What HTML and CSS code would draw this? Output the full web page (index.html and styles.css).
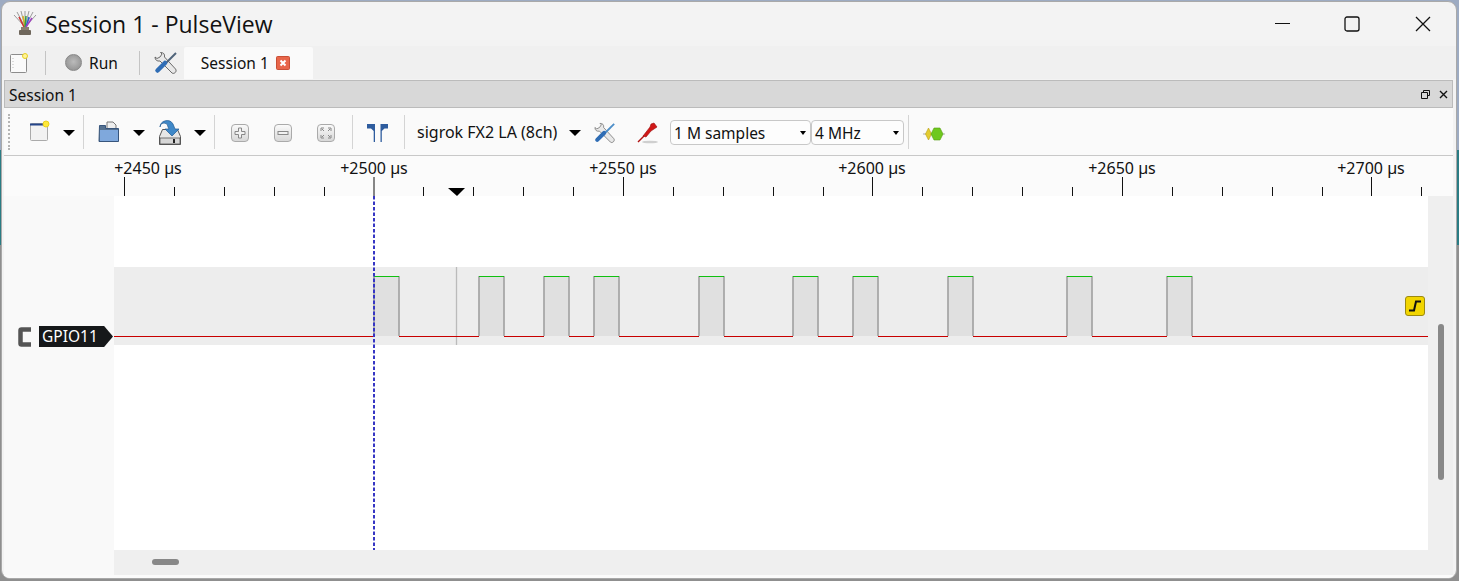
FILE: index.html
```html
<!DOCTYPE html>
<html lang="en">
<head>
    <meta charset="UTF-8">
    <title>Session 1 - PulseView</title>
    <link rel="stylesheet" href="styles.css">
</head>
<body>
<div class="window">

    <!-- Title bar -->
    <div class="titlebar">
        <svg class="app-icon" width="24" height="26" viewBox="0 0 24 26">
            <path d="M12 16L1 4M12 16L4 1M12 16L8 0M12 16L12 0M12 16L16 0M12 16L20 1M12 16L23 4" stroke="#9a9a9a" stroke-width="1" fill="none"/>
            <path d="M11 16L6 6" stroke="#d03030" stroke-width="1.5"/>
            <path d="M12 16L10 5" stroke="#e0b020" stroke-width="1.5"/>
            <path d="M12 16L13 5" stroke="#30a040" stroke-width="1.5"/>
            <path d="M13 16L16 6" stroke="#3060d0" stroke-width="1.5"/>
            <path d="M13 16L19 7" stroke="#a040c0" stroke-width="1.5"/>
            <rect x="8" y="16" width="8" height="3" fill="#8a7f70"/>
            <rect x="6" y="19" width="12" height="5" rx="1" fill="#6f675c"/>
        </svg>
        <div class="title">Session 1 - PulseView</div>
        <div class="win-buttons">
            <svg class="win-min" width="16" height="16" viewBox="0 0 16 16"><path d="M0 7.500H15" stroke="#111" stroke-width="1"/></svg>
            <svg width="16" height="16" viewBox="0 0 16 16"><rect x="1" y="1" width="14" height="14" rx="2" fill="none" stroke="#111" stroke-width="1.300"/></svg>
            <svg width="16" height="16" viewBox="0 0 16 16"><path d="M1 1L15 15M15 1L1 15" stroke="#111" stroke-width="1.300"/></svg>
        </div>
    </div>

    <!-- Tab bar -->
    <div class="tabbar">
        <svg class="tab-new" width="20" height="22" viewBox="0 0 20 22">
            <rect x="1.500" y="2.500" width="16" height="18" rx="1" fill="#fafafa" stroke="#8c8c8c"/>
            <path d="M4 6v12" stroke="#bbb" stroke-dasharray="1 2"/>
            <circle cx="16" cy="4" r="2.500" fill="#fff39a" stroke="#e8d020"/>
        </svg>
        <span class="tab-sep"></span>
        <div class="run-btn">
            <span class="run-led"></span>
            <span>Run</span>
        </div>
        <span class="tab-sep"></span>
        <svg class="tab-tools" width="24" height="24" viewBox="0 0 24 24">
            <path d="M6.500 1.500L8 3 6 6 3 7.500 1 6C1 9 3 10.500 6 10L18 22C20 23.500 23.500 20.500 21.500 18L10.500 6C11 3 9.500 1.500 6.500 1.500z" fill="#e8e8e8" stroke="#5c5c5c" stroke-width="0.900"/>
            <path d="M22 2L12 12" stroke="#50647a" stroke-width="2"/>
            <path d="M11 12L3.500 19.500" stroke="#2f6db5" stroke-width="4.500" stroke-linecap="round"/>
        </svg>
        <div class="tab">
            <span>Session 1</span>
            <svg width="14" height="14" viewBox="0 0 14 14">
                <rect x="0.500" y="0.500" width="13" height="13" rx="1" fill="#e8664a" stroke="#c94f35"/>
                <path d="M4.500 4.500l5 5M9.500 4.500l-5 5" stroke="#fff" stroke-width="2"/>
            </svg>
        </div>
    </div>

    <div class="dock-title">
        <span>Session 1</span>
        <div class="dock-buttons">
            <svg width="9" height="9" viewBox="0 0 9 9"><path d="M2.500 2.500V.5h6v5h-2M.5 2.500h6v6h-6z" fill="none" stroke="#111"/></svg>
            <svg width="9" height="9" viewBox="0 0 9 9"><path d="M1 1l7 7M8 1l-7 7" stroke="#111" stroke-width="1.400"/></svg>
        </div>
    </div>

    <!-- Main toolbar -->
    <div class="toolbar">
        <span class="grip"></span>
        <svg class="tool-new" width="22" height="22" viewBox="0 0 22 22">
            <rect x="2.500" y="3.500" width="17" height="17" rx="1" fill="#f2f2f2" stroke="#aaa"/>
            <path d="M2 4.500H18" stroke="#24458a" stroke-width="2"/>
            <circle cx="18" cy="4" r="3" fill="#ffe93a" stroke="#e8d020"/>
        </svg>
        <span class="arrow arrow-new"></span>
        <span class="sep sep-new"></span>
        <svg class="tool-open" width="22" height="22" viewBox="0 0 22 22">
            <path d="M9 1h6l3 3v5H9z" fill="#eee" stroke="#777"/>
            <path d="M1.500 4.500h6v3h13v13h-19.500z" fill="#54708f" stroke="#37557c"/>
            <rect x="2" y="9" width="18" height="11" fill="#7fa8dc"/>
        </svg>
        <span class="arrow arrow-open"></span>
        <svg class="tool-save" width="24" height="26" viewBox="0 0 24 26">
            <path d="M1.500 16.500l3-7h15l3 7v8h-21z" fill="#e6e6e6" stroke="#555"/>
            <rect x="2" y="18" width="20" height="6" fill="#d6d6d6" stroke="#555" stroke-width="0.800"/>
            <rect x="15" y="19" width="2" height="4" fill="#222"/>
            <path d="M2 7a7 7 0 0 1 13 -3l2 5h4l-7 7-7-7h4l-1-2a4 4 0 0 0-8 0z" fill="#3f88c8" stroke="#1f5a94" stroke-width="0.700"/>
        </svg>
        <span class="arrow arrow-save"></span>
        <span class="sep sep-save"></span>
        <div class="zoom-btn zoom-in"><svg width="12" height="12" viewBox="0 0 12 12"><path d="M4.500 1h3v3.500H11v3H7.500V11h-3V7.500H1v-3h3.500z" fill="#f2f2f2" stroke="#888"/></svg></div>
        <div class="zoom-btn zoom-out"><svg width="12" height="12" viewBox="0 0 12 12"><rect x="1" y="4.500" width="10" height="3" fill="#f2f2f2" stroke="#888"/></svg></div>
        <div class="zoom-btn zoom-fit"><svg width="12" height="12" viewBox="0 0 12 12"><path d="M1 4V1h3M8 1h3v3M11 8v3H8M4 11H1V8M4 4L2 2M8 4l2-2M8 8l2 2M4 8l-2 2" fill="none" stroke="#888"/></svg></div>
        <span class="sep sep-zoom"></span>
        <svg class="tool-cursors" width="24" height="20" viewBox="0 0 24 20">
            <path d="M1 1H9V19H7.700V8L5 5.500H1z" fill="#2e5c9e"/>
            <path d="M22 1H14.500V19H15.800V8L18.500 5.500H22z" fill="#2e5c9e"/>
        </svg>
        <span class="sep sep-cursors"></span>
        <span class="device">sigrok FX2 LA (8ch)</span>
        <span class="arrow arrow-device"></span>
        <svg class="tool-config" width="22" height="22" viewBox="0 0 24 24">
            <path d="M6.500 1.500L8 3 6 6 3 7.500 1 6C1 9 3 10.500 6 10L18 22C20 23.500 23.500 20.500 21.500 18L10.500 6C11 3 9.500 1.500 6.500 1.500z" fill="#e8e8e8" stroke="#7a7a7a" stroke-width="0.900"/>
            <path d="M22 2L12 12" stroke="#4d8ec8" stroke-width="2"/>
            <path d="M11 12L3.500 19.500" stroke="#2f6db5" stroke-width="4.500" stroke-linecap="round"/>
        </svg>
        <svg class="tool-probe" width="22" height="22" viewBox="0 0 22 22">
            <ellipse cx="13" cy="20" rx="8" ry="1.300" fill="#cfcfcf"/>
            <path d="M1 20l6-6" stroke="#b01010" stroke-width="1.500"/>
            <path d="M6 14l7-9 1-3 3-1 3 4-3 2-3 2-5 6z" fill="#d01818" stroke="#9a0e0e" stroke-width="0.600"/>
        </svg>
        <div class="select select-samples"><span>1 M samples</span><span class="arrow-small"></span></div>
        <div class="select select-rate"><span>4 MHz</span><span class="arrow-small"></span></div>
        <span class="sep sep-rate"></span>
        <svg class="tool-decoder" width="22" height="14" viewBox="0 0 22 14">
            <path d="M0 7H22" stroke="#aaa"/>
            <path d="M2.500 7l3-6 3 6-3 6z" fill="#e4cc30" stroke="#b8a010" stroke-width="0.600"/>
            <path d="M8 7l3-6h6l3 6-3 6h-6z" fill="#6fc81e" stroke="#55a010" stroke-width="0.600"/>
        </svg>
    </div>

    <!-- Signal view -->
    <div class="view">
        <svg class="ruler" width="1449" height="40" viewBox="0 0 1449 40">
            <text x="144" y="18">+2450 µs</text>
            <text x="370" y="18">+2500 µs</text>
            <text x="619" y="18">+2550 µs</text>
            <text x="868" y="18">+2600 µs</text>
            <text x="1118" y="18">+2650 µs</text>
            <text x="1367" y="18">+2700 µs</text>
            <path class="ticks" d="M120.500 21V40M370 21V40M619.500 21V40M868.500 21V40M1118.500 21V40M1367.500 21V40"/>
            <path class="ticks" d="M170.500 31V40M220.500 31V40M270.500 31V40M320.500 31V40M419.500 31V40M469.500 31V40M519.500 31V40M569.500 31V40M669.500 31V40M719.500 31V40M769.500 31V40M819.500 31V40M918.500 31V40M968.500 31V40M1018.500 31V40M1068.500 31V40M1168.500 31V40M1218.500 31V40M1268.500 31V40M1318.500 31V40M1417.500 31V40"/>
            <path class="marker" d="M444 32H461L453 40z"/>
        </svg>
        <div class="view-body">
            <div class="headers">
                <div class="signal-label">
                    <svg width="14" height="20" viewBox="0 0 14 20"><path d="M13 2.500H3.500a1 1 0 0 0-1 1v13a1 1 0 0 0 1 1H13" fill="none" stroke="#555" stroke-width="4.500"/></svg>
                    <span class="signal-name">GPIO11</span>
                </div>
            </div>
            <div class="canvas">
                <svg class="traces" width="1314" height="354" viewBox="0 0 1314 354">
                    <rect class="band" x="0" y="71" width="1314" height="78"/>
                    <path class="pulse-fill" d="M260 80h25v60h-25zM365 80h25v60h-25zM430 80h25v60h-25zM480 80h25v60h-25zM585 80h25v60h-25zM679 80h25v60h-25zM739 80h25v60h-25zM834 80h25v60h-25zM953 80h25v60h-25zM1053 80h25v60h-25z"/>
                    <path class="marker-line" d="M342.500 71V149"/>
                    <path class="edge" d="M260 80V140M285 80V140M365 80V140M390 80V140M430 80V140M455 80V140M480 80V140M505 80V140M585 80V140M610 80V140M679 80V140M704 80V140M739 80V140M764 80V140M834 80V140M859 80V140M953 80V140M978 80V140M1053 80V140M1078 80V140"/>
                    <path class="high" d="M260 80.500h25M365 80.500h25M430 80.500h25M480 80.500h25M585 80.500h25M679 80.500h25M739 80.500h25M834 80.500h25M953 80.500h25M1053 80.500h25"/>
                    <path class="low" d="M0 140.500H260M285 140.500H365M390 140.500H430M455 140.500H480M505 140.500H585M610 140.500H679M704 140.500H739M764 140.500H834M859 140.500H953M978 140.500H1053M1078 140.500H1314"/>
                    <path class="cursor" d="M260 0V354"/>
                </svg>
                <div class="trigger">
                    <svg width="18" height="18" viewBox="0 0 18 18"><path d="M3 13.500H8L10 4.500H15" fill="none" stroke="#111" stroke-width="2"/></svg>
                </div>
            </div>
            <div class="vscroll"><span class="vthumb"></span></div>
            <div class="corner"></div>
            <div class="hscroll"><span class="hthumb"></span></div>
        </div>
    </div>
</div>
</body>
</html>
```

FILE: styles.css
```css
html, body {
    margin: 0;
    height: 581px;
    overflow: hidden;
}
body {
    background: linear-gradient(#9dabc2 0, #9dabc2 150px, #2a7c84 150px, #2a7c84 245px, #8f8f8f 245px);
    font-family: "Noto Sans", sans-serif;
    font-size: 15.5px;
    color: #111;
}
.window {
    box-sizing: border-box;
    position: relative;
    margin: 1px 2px 0 1px;
    width: 1456px;
    height: 578px;
    background: #f3f3f3;
    border: 1px solid #a9a9a9;
    border-radius: 9px;
    overflow: hidden;
    display: flex;
    flex-direction: column;
}

/* title bar */
.titlebar {
    height: 44px;
    flex: none;
    display: flex;
    align-items: center;
    padding-left: 11px;
}
.app-icon {
    margin-right: 8px;
}
.title {
    font-family: "Open Sans", sans-serif;
    font-size: 23px;
    color: #111;
}
.win-buttons {
    margin-left: auto;
    display: flex;
    gap: 55px;
    padding-right: 25px;
    align-items: center;
}
.win-min {
    margin-right: -2px;
}

/* tab bar */
.tabbar {
    height: 33px;
    flex: none;
    display: flex;
    align-items: center;
    background: #f0f0f0;
    padding-left: 7px;
}
.tab-sep {
    width: 1px;
    height: 24px;
    background: #c4c4c4;
}
.tab-new {
    margin-right: 16px;
}
.run-btn {
    display: flex;
    align-items: center;
    gap: 7px;
    padding: 0 21px 0 19px;
}
.run-led {
    width: 17px;
    height: 17px;
    border-radius: 50%;
    background: radial-gradient(circle at 50% 45%, #bbb, #8a8a8a);
    border: 1px solid #888;
    box-sizing: border-box;
}
.tab-tools {
    margin: 0 6px 0 14px;
}
.tab {
    box-sizing: border-box;
    height: 32px;
    width: 129px;
    display: flex;
    align-items: center;
    gap: 7px;
    padding-left: 17px;
    background: #fafafa;
    border-radius: 2px 2px 0 0;
}

/* dock title */
.dock-title {
    box-sizing: border-box;
    flex: none;
    height: 28px;
    margin: 1px 3px 0 2px;
    padding: 1px 4px 0;
    display: flex;
    align-items: center;
    justify-content: space-between;
    background: #d8d8d8;
    border: 1px solid #bbb;
}
.dock-buttons {
    display: flex;
    gap: 9px;
}

/* toolbar */
.toolbar {
    box-sizing: border-box;
    flex: none;
    height: 48px;
    margin: 0 3px 0 2px;
    position: relative;
    background: #fafafa;
    border-bottom: 1px solid #c8c8c8;
}
.toolbar > * {
    position: absolute;
}
.grip {
    left: 4px;
    top: 6px;
    height: 36px;
    border-left: 2px dotted #b5b5b5;
}
.sep {
    top: 7px;
    width: 1px;
    height: 34px;
    background: #d4d4d4;
}
.arrow {
    width: 0;
    height: 0;
    top: 22px;
    border-left: 6px solid transparent;
    border-right: 6px solid transparent;
    border-top: 6px solid #000;
}
.tool-new { left: 24px; top: 12px; }
.arrow-new { left: 59px; }
.sep-new { left: 79px; }
.tool-open { left: 94px; top: 13px; }
.arrow-open { left: 129px; }
.tool-save { left: 154px; top: 12px; }
.arrow-save { left: 190px; }
.sep-save { left: 210px; }
.zoom-btn {
    box-sizing: border-box;
    top: 16px;
    width: 18px;
    height: 18px;
    border: 1px solid #aaa;
    border-radius: 4px;
    background: linear-gradient(#fafafa, #d8d8d8);
    display: flex;
    align-items: center;
    justify-content: center;
}
.zoom-in { left: 227px; }
.zoom-out { left: 270px; }
.zoom-fit { left: 313px; }
.sep-zoom { left: 348px; }
.tool-cursors { left: 362px; top: 15px; }
.sep-cursors { left: 400px; }
.device { left: 413px; top: 13px; font-size: 16px; }
.arrow-device { left: 565px; }
.tool-config { left: 590px; top: 14px; }
.tool-probe { left: 633px; top: 14px; }
.select {
    box-sizing: border-box;
    top: 12px;
    height: 25px;
    display: flex;
    align-items: center;
    justify-content: space-between;
    padding: 0 4px 0 3px;
    background: #fdfdfd;
    border: 1px solid #c8c8c8;
    border-radius: 4px;
}
.select-samples { left: 666px; width: 141px; }
.select-rate { left: 807px; width: 93px; }
.arrow-small {
    width: 0;
    height: 0;
    border-left: 3.500px solid transparent;
    border-right: 3.500px solid transparent;
    border-top: 4px solid #000;
}
.sep-rate { left: 904px; }
.tool-decoder { left: 919px; top: 19px; }

/* signal view */
.view {
    flex: 1;
    margin: 0 3px 0 2px;
    background: #fbfbfb;
}
.ruler {
    display: block;
}
.ruler text {
    font-family: "Noto Sans", sans-serif;
    font-size: 16px;
    fill: #111;
    text-anchor: middle;
}
.ticks {
    stroke: #111;
    stroke-width: 1;
    fill: none;
}
.marker {
    fill: #000;
}
.view-body {
    display: grid;
    grid-template-columns: 110px 1314px 25px;
    grid-template-rows: 354px 25px;
}
.headers {
    grid-row: 1 / 3;
    background: #f9f9f9;
    position: relative;
}
.signal-label {
    position: absolute;
    top: 130px;
    left: 14px;
    display: flex;
    align-items: center;
    gap: 7px;
}
.signal-name {
    box-sizing: border-box;
    height: 21px;
    width: 74px;
    padding-left: 3px;
    line-height: 20px;
    color: #fff;
    background: #16181a;
    clip-path: polygon(0 0, 88% 0, 100% 50%, 88% 100%, 0 100%);
}
.canvas {
    position: relative;
    background: #fff;
}
.traces {
    display: block;
}
.band { fill: #ededed; }
.pulse-fill { fill: #e0e0e0; }
.marker-line { stroke: #bbb; stroke-width: 1.300; fill: none; }
.edge { stroke: #a4a4a4; stroke-width: 1.700; fill: none; }
.high { stroke: #10c010; stroke-width: 1.200; fill: none; }
.low { stroke: #c80000; stroke-width: 1.200; fill: none; }
.cursor { stroke: #3636c4; stroke-width: 2; stroke-dasharray: 3.500 2; fill: none; }
.trigger {
    position: absolute;
    left: 1291px;
    top: 100px;
    box-sizing: border-box;
    width: 20px;
    height: 20px;
    border: 1px solid #9c8a10;
    border-radius: 3px;
    background: #f2d500;
    display: flex;
    align-items: center;
    justify-content: center;
}
.vscroll {
    background: #efefef;
    position: relative;
}
.vthumb {
    position: absolute;
    left: 10px;
    top: 128px;
    width: 6px;
    height: 156px;
    border-radius: 3px;
    background: #888;
}
.hscroll {
    grid-column: 2;
    grid-row: 2;
    background: #efefef;
    position: relative;
}
.hthumb {
    position: absolute;
    left: 38px;
    top: 9px;
    width: 27px;
    height: 6px;
    border-radius: 3px;
    background: #888;
}
.corner {
    grid-column: 3;
    grid-row: 2;
    background: #efefef;
}
```
